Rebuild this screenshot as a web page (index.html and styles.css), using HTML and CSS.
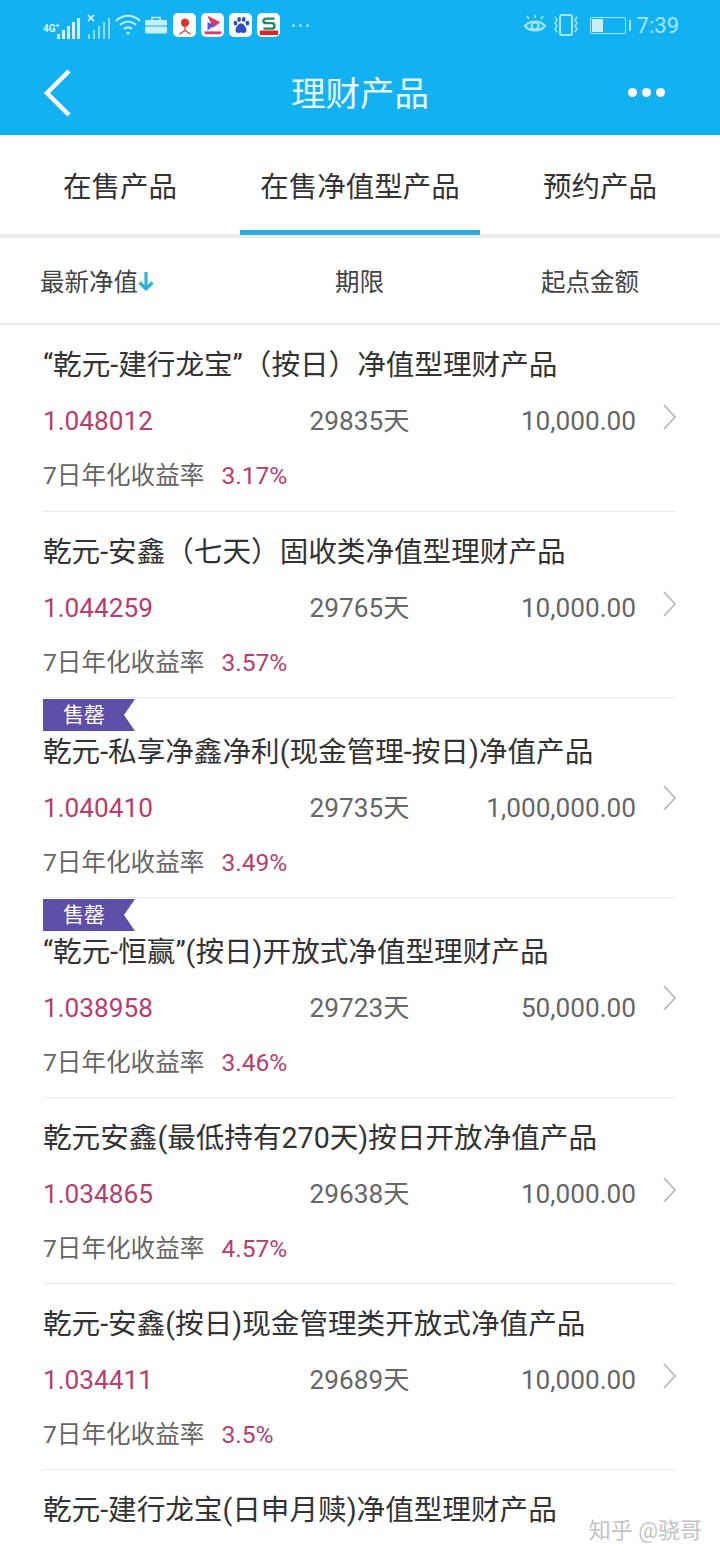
FILE: index.html
```html
<!DOCTYPE html>
<html lang="zh-CN">
<head>
    <meta charset="UTF-8">
    <title>理财产品</title>
    <link rel="stylesheet" href="styles.css">
</head>
<body>
    <div class="page">
        <header class="top">
            <div class="status">
                <div class="status-left">
                    <span class="net">4G<sup>+</sup></span>
                    <svg class="sig" width="24" height="22" viewBox="0 0 24 22"><g fill="#d8f3ff"><rect x="0" y="16" width="3" height="5"/><rect x="5" y="12" width="3" height="9"/><rect x="10" y="8" width="3" height="13"/><rect x="15" y="4" width="3" height="17"/><rect x="20" y="0" width="3" height="21"/></g></svg>
                    <svg class="sig2" width="24" height="26" viewBox="0 0 24 26"><path d="M1 1l6 6M7 1L1 7" stroke="#e4f7ff" stroke-width="1.6"/><g fill="#8cdcf8"><rect x="1" y="20" width="2" height="5"/><rect x="6" y="16" width="2" height="9"/><rect x="11" y="12" width="2" height="13"/><rect x="16" y="8" width="2" height="17"/><rect x="21" y="4" width="2" height="21"/></g></svg>
                    <svg class="wifi" width="26" height="22" viewBox="0 0 26 22" fill="none" stroke="#c8effd" stroke-width="2"><path d="M1 7c7-7 17-7 24 0M5 11c5-4.500 11-4.500 16 0M9 15c2.500-2 5.500-2 8 0"/><circle cx="13" cy="19" r="1.600" fill="#c8effd" stroke="none"/></svg>
                    <svg class="case" width="22" height="18" viewBox="0 0 22 18"><path d="M7 4V1.500h8V4" fill="none" stroke="#c8effd" stroke-width="1.600"/><rect x="0" y="4" width="22" height="5.500" rx="1" fill="#c8effd"/><rect x="0" y="10.500" width="22" height="7" rx="1" fill="#c8effd"/></svg>
                    <span class="app">
                        <svg viewBox="0 0 24 24"><circle cx="12" cy="9.500" r="4.500" fill="#d9372a"/><path d="M12 14v4M6 22l6-4 6 4" stroke="#c9603f" stroke-width="1.600" fill="none"/></svg>
                    </span>
                    <span class="app">
                        <svg viewBox="0 0 24 24"><path d="M6 2l14 7-8 6z" fill="#e8336d"/><path d="M6 9l8 3-8 6z" fill="#4a5ee8"/><rect x="3" y="19" width="18" height="3" fill="#e8336d"/></svg>
                    </span>
                    <span class="app">
                        <svg viewBox="0 0 24 24" fill="#2b4fc0"><ellipse cx="6" cy="10" rx="2" ry="2.600"/><ellipse cx="10" cy="6" rx="2" ry="2.600"/><ellipse cx="15" cy="6" rx="2" ry="2.600"/><ellipse cx="19" cy="10" rx="2" ry="2.600"/><path d="M12 10c-3 0-6 5-6 8 0 3 4 3 6 2 2 1 6 1 6-2 0-3-3-8-6-8z"/></svg>
                    </span>
                    <span class="app">
                        <svg viewBox="0 0 24 24" fill="none"><path d="M18 5H9C5 5 5 10 9 10h6c4 0 4 6 0 6H6" stroke="#1d8a57" stroke-width="2.600"/><rect x="2" y="18" width="20" height="5" fill="#d8262c"/></svg>
                    </span>
                    <span class="more-dots"><i></i><i></i><i></i></span>
                </div>
                <div class="status-right">
                    <svg width="24" height="20" viewBox="0 0 24 20" fill="none" stroke="#a4e6fb" stroke-width="2.200"><path d="M2 11c5-6 15-6 20 0-5 6-15 6-20 0z"/><circle cx="12" cy="11" r="3.500"/><path d="M4 1l2 3M20 1l-2 3M12 0v3" stroke-width="1.600"/></svg>
                    <svg width="28" height="22" viewBox="0 0 28 22" fill="none" stroke="#a4e6fb" stroke-width="2"><rect x="8" y="1" width="12" height="20" rx="2"/><path d="M3 3l2 3-2 3 2 3-2 3 2 3M25 3l-2 3 2 3-2 3 2 3-2 3" stroke-width="1.500"/></svg>
                    <span class="battery"><span class="battery-fill"></span></span>
                    <span class="clock">7:39</span>
                </div>
            </div>
            <div class="nav">
                <svg class="back" width="30" height="48" viewBox="0 0 30 48" fill="none" stroke="#fff" stroke-width="4.500"><path d="M26 2L4 24l22 22"/></svg>
                <h1>理财产品</h1>
                <span class="nav-more"><i></i><i></i><i></i></span>
            </div>
        </header>

        <nav class="tabs">
            <div class="tab">在售产品</div>
            <div class="tab active">在售净值型产品</div>
            <div class="tab">预约产品</div>
        </nav>

        <div class="sort">
            <div class="sort-a">最新净值<svg width="16" height="20" viewBox="0 0 16 20" fill="none" stroke="#2fb3dc" stroke-width="3.200"><path d="M8 1v17M1.500 11.500L8 18l6.500-6.500"/></svg></div>
            <div class="sort-b">期限</div>
            <div class="sort-c">起点金额</div>
        </div>

        <div class="list" id="list"></div>
        <div class="watermark">知乎 @骁哥</div>
    </div>
    <script>
        var products = [
            ['“乾元-建行龙宝”（按日）净值型理财产品', '1.048012', '29835天', '10,000.00', '3.17%', false],
            ['乾元-安鑫（七天）固收类净值型理财产品', '1.044259', '29765天', '10,000.00', '3.57%', false],
            ['乾元-私享净鑫净利(现金管理-按日)净值产品', '1.040410', '29735天', '1,000,000.00', '3.49%', true],
            ['“乾元-恒赢”(按日)开放式净值型理财产品', '1.038958', '29723天', '50,000.00', '3.46%', true],
            ['乾元安鑫(最低持有270天)按日开放净值产品', '1.034865', '29638天', '10,000.00', '4.57%', false],
            ['乾元-安鑫(按日)现金管理类开放式净值产品', '1.034411', '29689天', '10,000.00', '3.5%', false],
            ['乾元-建行龙宝(日申月赎)净值型理财产品', '', '', '', '', false]
        ];

        var html = '';
        products.forEach(function (p) {
            html += '<div class="item' + (p[5] ? ' sold' : '') + '">';
            if (p[5]) html += '<div class="tag">售罄</div>';
            html += '<div class="title">' + p[0] + '</div>';
            if (p[1]) {
                html += '<div class="row"><span class="nav-value">' + p[1] + '</span><span class="days">' + p[2] + '</span>' +
                    '<span class="amount">' + p[3] + '<svg class="arrow" width="15" height="26" viewBox="0 0 15 26" fill="none" stroke="#b5b5b5" stroke-width="1.600"><path d="M2 1l11 12L2 25"/></svg></span></div>';
                html += '<div class="rate">7日年化收益率<b>' + p[4] + '</b></div>';
            }
            html += '</div>';
        });
        document.getElementById('list').innerHTML = html;
    </script>
</body>
</html>
```

FILE: styles.css
```css
* {
    box-sizing: border-box;
}

html, body {
    margin: 0;
    padding: 0;
}

body {
    background-color: #fff;
    font-family: Roboto, "Noto Sans CJK SC", sans-serif;
    color: #333;
}

.page {
    position: relative;
    width: 720px;
    height: 1560px;
    overflow: hidden;
}

.top {
    background-color: #12b1f1;
    height: 135px;
}

.status {
    display: flex;
    justify-content: space-between;
    align-items: center;
    height: 50px;
    padding: 0 41px 0 43px;
}

.status-left, .status-right {
    display: flex;
    align-items: center;
}

.status-left {
    gap: 4px;
}

.status-right {
    gap: 5px;
}

.net {
    align-self: flex-start;
    margin-top: 13px;
    font-size: 10px;
    line-height: 12px;
    font-weight: 700;
    color: #d8f3ff;
}

.net sup {
    font-size: 7px;
    line-height: 0;
}

.sig {
    margin-left: -6px;
    margin-top: 8px;
}

.sig2 {
    margin-left: 2px;
    margin-top: 4px;
}

.case + .app {
    margin-left: 2px;
}

.app {
    display: flex;
    align-items: center;
    justify-content: center;
    width: 23px;
    height: 24px;
    background-color: #fff;
    border-radius: 5px;
}

.app + .app {
    margin-left: 1px;
}

.app svg {
    width: 22px;
    height: 22px;
}

.more-dots, .nav-more {
    display: flex;
}

.more-dots {
    gap: 4px;
    margin-left: 8px;
}

.more-dots i {
    width: 3px;
    height: 3px;
    border-radius: 50%;
    background-color: #9fe2fb;
}

.battery {
    position: relative;
    width: 36px;
    height: 17px;
    margin-left: 5px;
    margin-right: 6px;
    border: 1px solid #a4e6fb;
    border-radius: 2px;
    padding: 1px;
}

.battery::after {
    content: "";
    position: absolute;
    right: -6px;
    top: 2px;
    width: 2px;
    height: 11px;
    background-color: #a4e6fb;
}

.battery-fill {
    display: block;
    width: 11px;
    height: 100%;
    background-color: #c9effc;
}

.clock {
    font-size: 22px;
    color: #a4e6fb;
}

.nav {
    display: grid;
    grid-template-columns: 1fr auto 1fr;
    align-items: center;
    height: 85px;
    padding: 0 55px 0 43px;
}

h1 {
    margin: 2px 0 0 12px;
    font-size: 34.500px;
    font-weight: 400;
    line-height: 48px;
    color: #e9f9ff;
}

.nav-more {
    justify-self: end;
    gap: 5px;
}

.nav-more i {
    width: 9px;
    height: 9px;
    border-radius: 50%;
    background-color: #fff;
}

.tabs {
    display: grid;
    grid-template-columns: 240px 240px 240px;
    height: 103px;
    border-bottom: 4px solid #ececec;
}

.tab {
    display: flex;
    align-items: center;
    justify-content: center;
    height: 100px;
    padding-bottom: 2px;
    font-size: 28.500px;
    color: #333;
}

.tab.active {
    box-shadow: inset 0 -5px 0 #2cabe0;
}

.sort {
    display: grid;
    grid-template-columns: 1fr auto 1fr;
    align-items: center;
    height: 87px;
    padding: 0 81px 0 40px;
    border-bottom: 2px solid #eeeeee;
    font-size: 24.500px;
    color: #444;
}

.sort-a {
    display: flex;
    align-items: center;
}

.sort-b {
    transform: translateX(20px);
}

.sort-c {
    text-align: right;
}

.list {
    padding: 0 43px;
}

.item {
    padding: 20px 0 18px;
    border-bottom: 1px solid #e9e9e9;
    margin-right: 1px;
}

.item:first-child {
    height: 187px;
}

.item:last-child {
    border-bottom: none;
}

.item.sold {
    padding-top: 1px;
}

.tag {
    width: 92px;
    height: 32px;
    margin-bottom: 1px;
    padding-left: 20px;
    background-color: #5d4fa8;
    clip-path: polygon(0 0, 100% 0, 88% 50%, 100% 100%, 0 100%);
    font-size: 21px;
    line-height: 32px;
    color: #fff;
}

.title {
    height: 40px;
    font-size: 28.600px;
    line-height: 40px;
    color: #333;
    white-space: nowrap;
    text-spacing-trim: space-all;
}

.row {
    display: grid;
    grid-template-columns: 1fr auto 1fr;
    align-items: baseline;
    height: 32px;
    margin-top: 20px;
    font-size: 26.200px;
    line-height: 32px;
    color: #666;
}

.nav-value {
    color: #b83d6c;
}

.amount {
    display: flex;
    align-items: baseline;
    justify-content: flex-end;
}

.arrow {
    align-self: center;
    margin-left: 26px;
    margin-right: -1px;
    margin-top: -8px;
}

.sold .arrow {
    margin-top: -20px;
}

.rate {
    height: 32px;
    margin-top: 23px;
    font-size: 24.600px;
    line-height: 32px;
    color: #666;
}

.rate b {
    margin-left: 17px;
    font-weight: 400;
    color: #b83d6c;
}

.watermark {
    position: absolute;
    right: 18px;
    bottom: 16px;
    font-size: 22px;
    color: #c4c4c4;
}
```
